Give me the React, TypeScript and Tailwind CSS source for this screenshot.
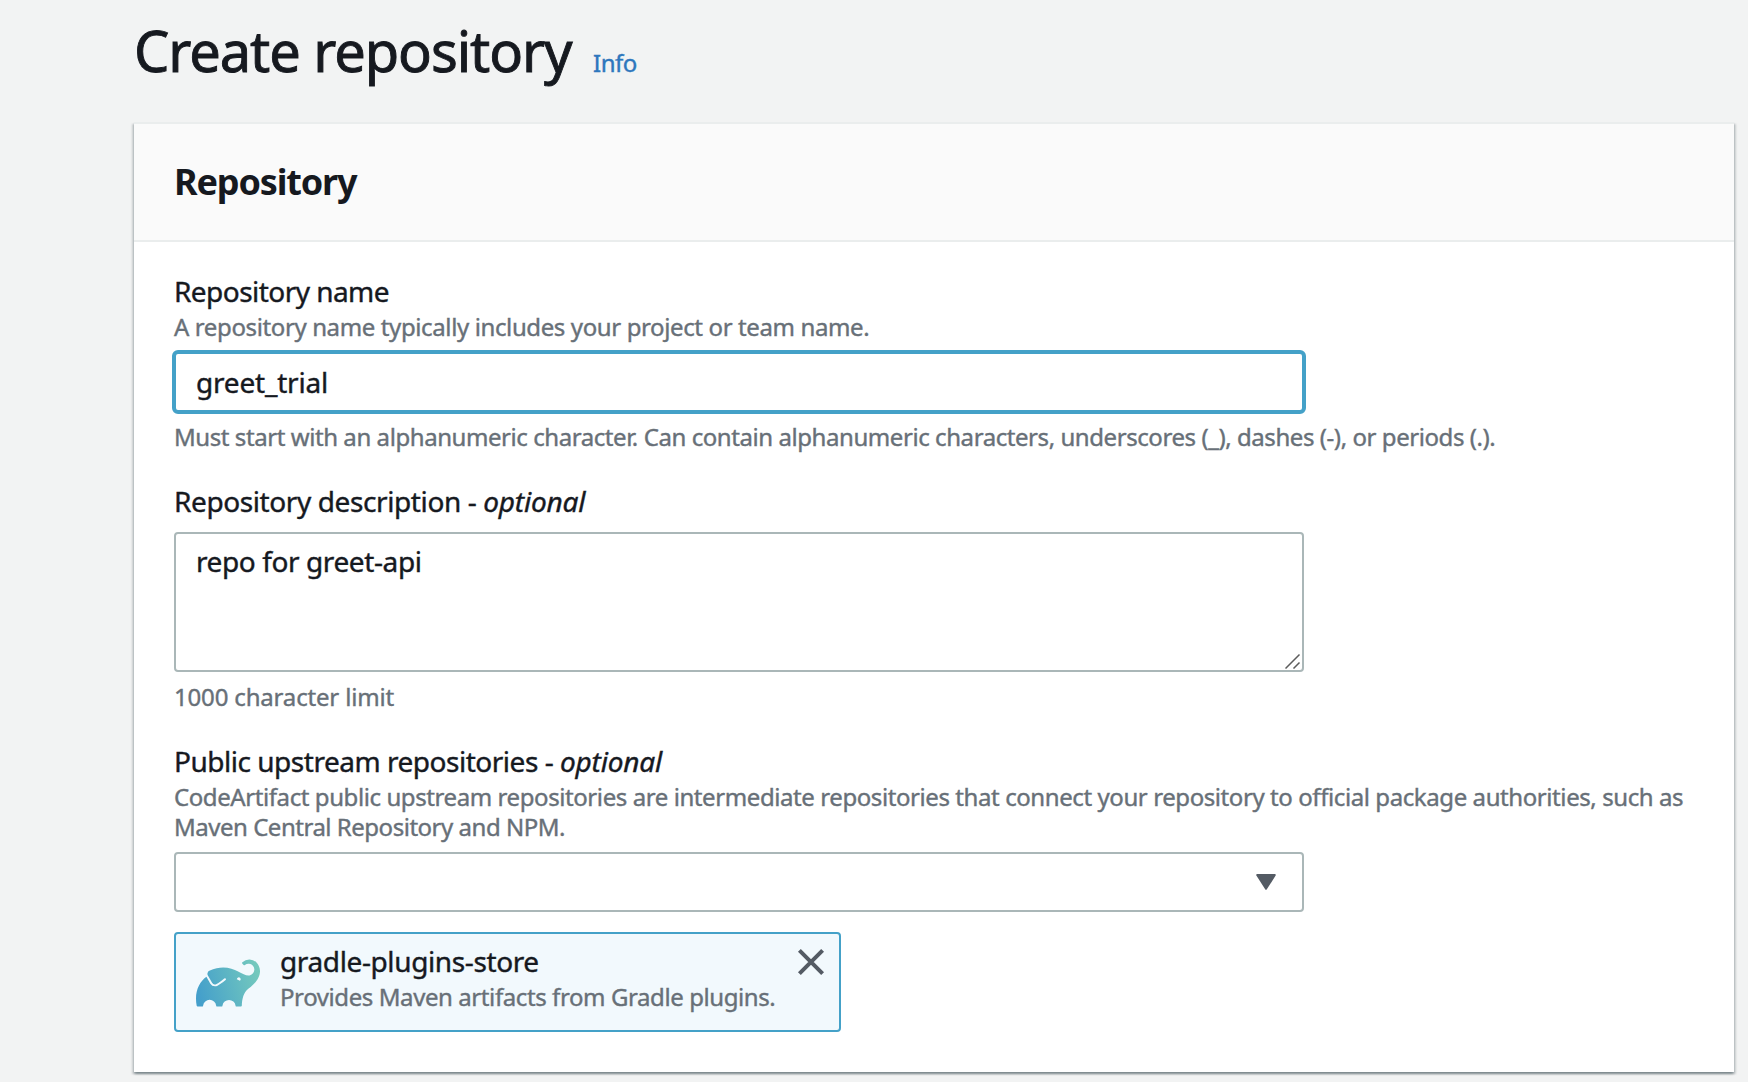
import type { ReactNode } from "react";
import { SiGradle } from "react-icons/si";

function Label({ children, className = "" }: { children: ReactNode; className?: string }) {
  return (
    <label className={`block h-9 text-[28px] leading-9 whitespace-pre text-[#16191f] ${className}`}>
      {children}
    </label>
  );
}

function Hint({ children, className = "" }: { children: ReactNode; className?: string }) {
  return (
    <p className={`text-2xl leading-[30px] whitespace-nowrap text-[#687078] ${className}`}>
      {children}
    </p>
  );
}

function Optional() {
  return <i className="tracking-[-0.2px]">optional</i>;
}

function ResizeGrip() {
  return (
    <svg
      className="absolute right-[1px] bottom-[1px] size-4"
      viewBox="0 0 16 16"
      stroke="#5c5c5c"
      strokeWidth="1.5"
    >
      <path d="M0.5 15.5 14.5 1.5M8.5 15.5l6-6" />
    </svg>
  );
}

function UpstreamToken() {
  return (
    <div className="mt-5 flex h-[100px] w-[667px] rounded-[4px] border-2 border-[#44a1c8] bg-[#f2f9fd]">
      <svg className="size-0" aria-hidden="true">
        <defs>
          <linearGradient id="elephant" x1="0" y1="0.6" x2="1" y2="0.4">
            <stop offset="0" stopColor="#449fcb" />
            <stop offset="1" stopColor="#74c9bd" />
          </linearGradient>
        </defs>
      </svg>
      <SiGradle className="mt-[17px] ml-5 size-16 shrink-0" style={{ fill: "url(#elephant)" }} />
      <div className="ml-5 flex-1 pt-[9px]">
        <p className="text-[28px] leading-9 tracking-[-0.38px] whitespace-nowrap text-[#16191f]">
          gradle-plugins-store
        </p>
        <Hint className="mt-[3px] tracking-[-0.41px]">
          Provides Maven artifacts from Gradle plugins.
        </Hint>
      </div>
      <button className="mt-[14px] mr-[14px] size-7" aria-label="Remove">
        <svg viewBox="0 0 28 28" className="size-7" stroke="#545b64" strokeWidth="4">
          <path d="M2.4 2.4 25.6 25.6M25.6 2.4 2.4 25.6" />
        </svg>
      </button>
    </div>
  );
}

export default function App() {
  return (
    <div className="h-[1082px] overflow-hidden bg-[#f2f3f3] pr-[14px] pl-[134px] font-['Noto_Sans','Open_Sans',sans-serif] text-[#16191f] [-webkit-text-stroke:0.4px]">
      <header className="flex h-[122px] items-baseline pt-[14px]">
        <h1 className="w-[459px] text-[56px] leading-[72px] tracking-[-1.07px] whitespace-nowrap [-webkit-text-stroke:0.9px]">
          Create repository
        </h1>
        <a className="text-2xl tracking-[-0.5px] text-[#2e77bd]">Info</a>
      </header>

      <section className="border-t-2 border-[#eaeded] bg-white shadow-[0_2px_2px_0_rgba(0,28,36,0.3),2px_2px_2px_0_rgba(0,28,36,0.15),-2px_2px_2px_0_rgba(0,28,36,0.15)]">
        <div className="flex h-[118px] items-center border-b-2 border-[#eaeded] bg-[#fafafa] pl-10">
          <h2 className="text-4xl font-bold tracking-[-1.15px] [-webkit-text-stroke:0px]">Repository</h2>
        </div>

        <div className="pt-[31px] pb-10 pl-10">
          <Label className="tracking-[-0.55px]">Repository name</Label>
          <Hint className="mt-[3px] tracking-[-0.38px]">
            A repository name typically includes your project or team name.
          </Hint>
          <div className="mt-2 -ml-[2px] flex h-16 w-[1134px] items-center rounded-[6px] border-4 border-[#44a1c8] bg-white pl-5 text-[28px] tracking-[-0.2px]">
            greet_trial
          </div>
          <Hint className="mt-2 tracking-[-0.43px]">
            Must start with an alphanumeric character. Can contain alphanumeric characters, underscores (_), dashes (-), or periods (.).
          </Hint>

          <Label className="mt-[31px] tracking-[-0.4px]">
            Repository description - <Optional />
          </Label>
          <div className="relative mt-[13px] h-[140px] w-[1130px] rounded-[4px] border-2 border-[#aab7b8] bg-white pt-[5px] pl-5 text-[28px] leading-[44px] tracking-[-0.4px]">
            repo for greet-api
            <ResizeGrip />
          </div>
          <Hint className="mt-[10px] tracking-[-0.17px]">1000 character limit</Hint>

          <Label className="mt-[31px] tracking-[-0.48px]">
            Public upstream repositories - <Optional />
          </Label>
          <Hint className="mt-[3px] tracking-[-0.415px]">
            CodeArtifact public upstream repositories are intermediate repositories that connect your repository to official package authorities, such as
            <br />
            <span className="tracking-[-0.48px]">Maven Central Repository and NPM.</span>
          </Hint>
          <div className="mt-[10px] flex h-[60px] w-[1130px] items-center justify-end rounded-[4px] border-2 border-[#aab7b8] bg-white pr-[26px]">
            <svg className="h-4 w-5" viewBox="0 0 20 16" fill="#545b64" stroke="#545b64" strokeWidth="2" strokeLinejoin="round">
              <path d="M1.2 1h17.6L10 14.8z" />
            </svg>
          </div>
          <UpstreamToken />
        </div>
      </section>
    </div>
  );
}
